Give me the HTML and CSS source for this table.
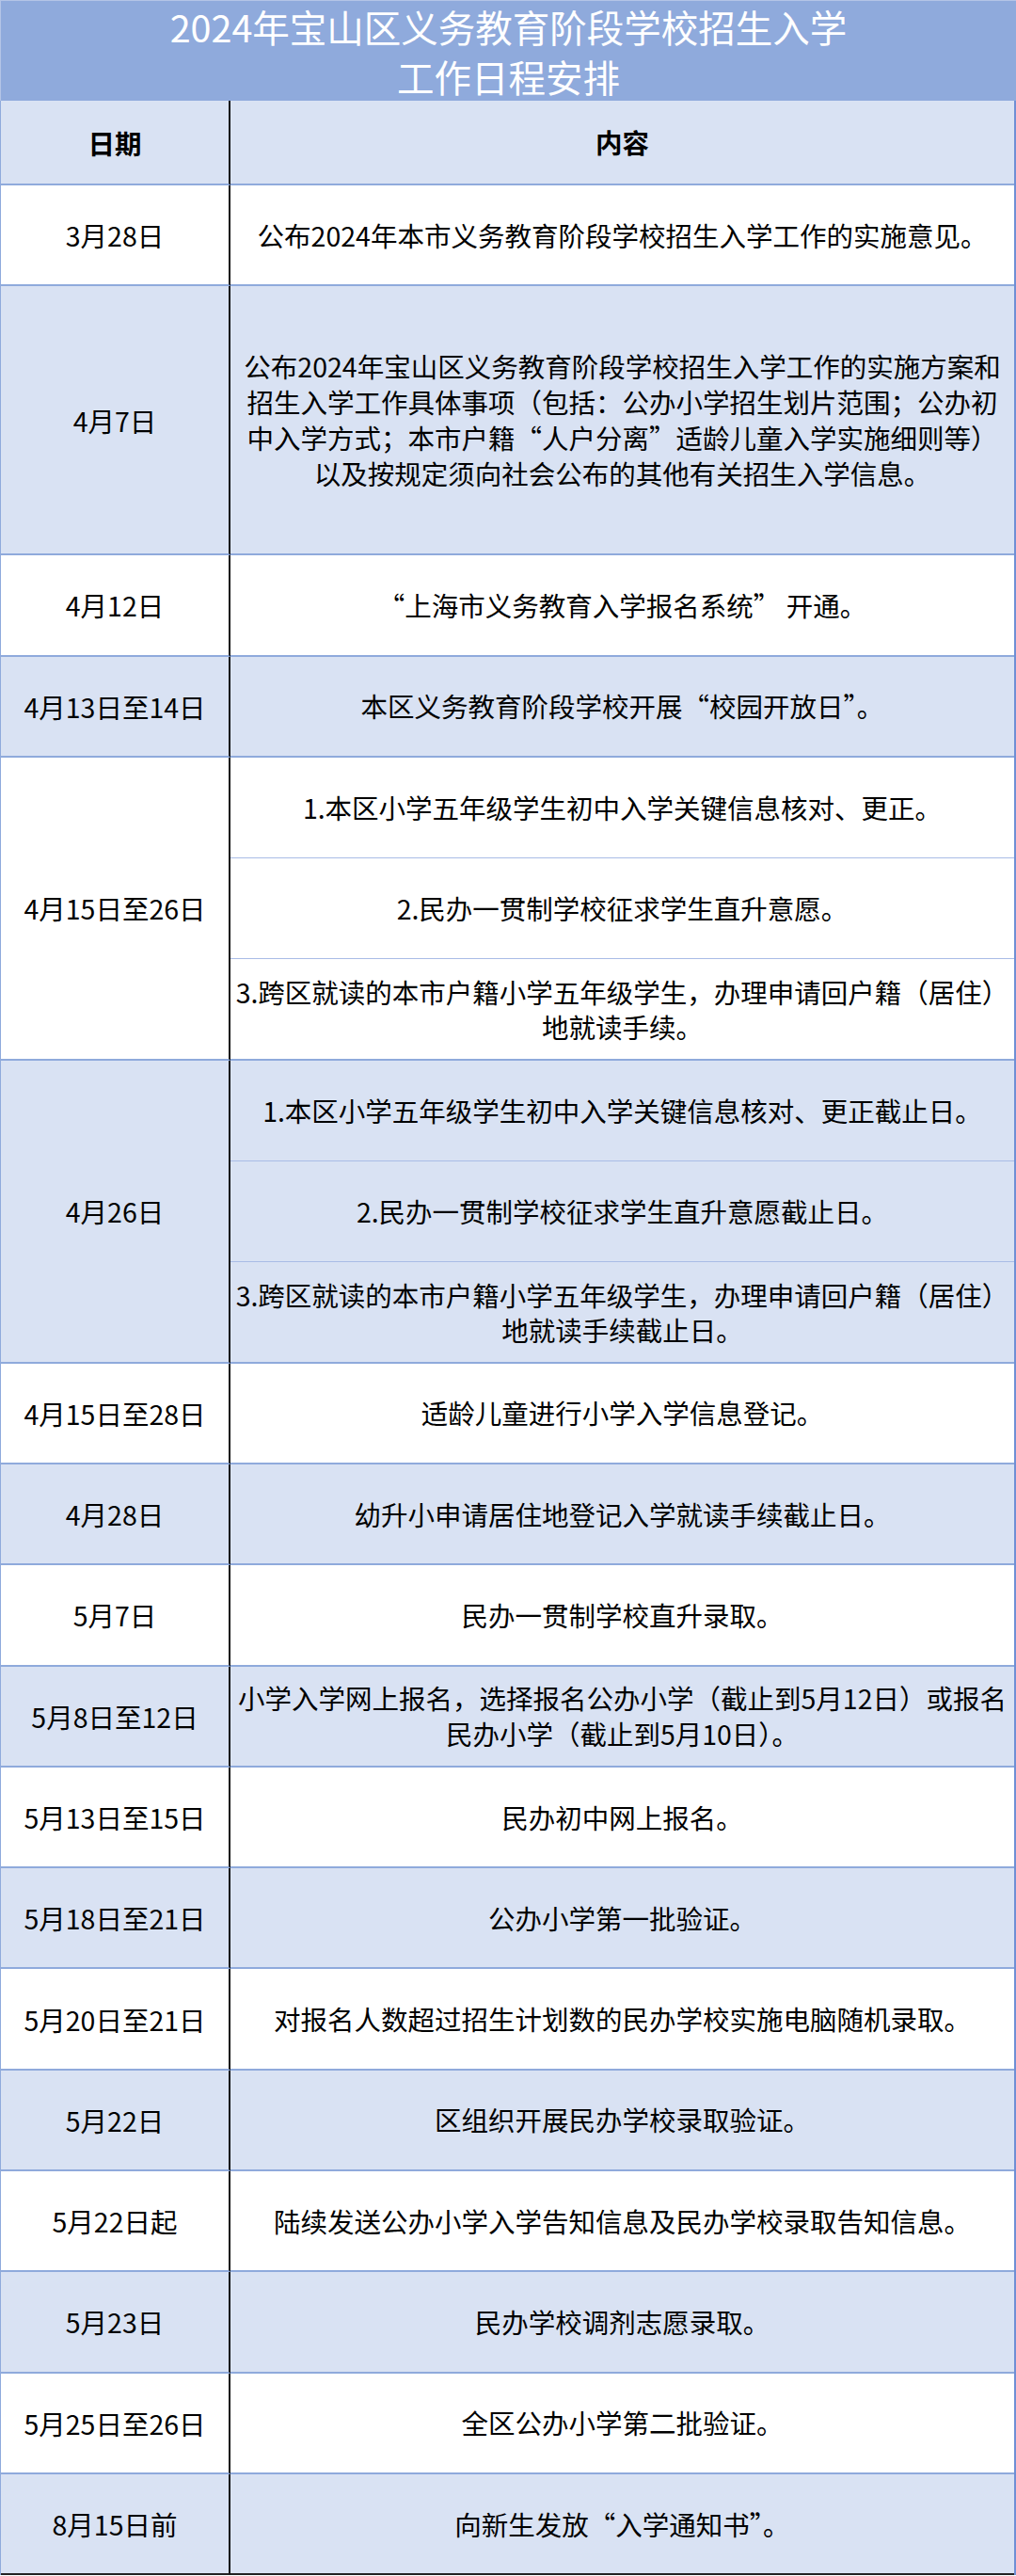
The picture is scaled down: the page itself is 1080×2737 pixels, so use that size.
FILE: index.html
```html
<!DOCTYPE html>
<html lang="zh-CN">
<head>
<meta charset="utf-8">
<title>2024年宝山区义务教育阶段学校招生入学工作日程安排</title>
<link rel="stylesheet" href="styles.css">
</head>
<body>
<div class="sheet">
  <div class="title">
    <div class="title-line">2024年宝山区义务教育阶段学校招生入学</div>
    <div class="title-line">工作日程安排</div>
  </div>
  <div class="table">
    <div class="row head">
      <div class="date">日期</div>
      <div class="content">内容</div>
    </div>
    <div class="row">
      <div class="date">3月28日</div>
      <div class="content">公布2024年本市义务教育阶段学校招生入学工作的实施意见。</div>
    </div>
    <div class="row alt tall">
      <div class="date">4月7日</div>
      <div class="content">公布2024年宝山区义务教育阶段学校招生入学工作的实施方案和<br>招生入学工作具体事项（包括：公办小学招生划片范围；公办初<br>中入学方式；本市户籍“人户分离”适龄儿童入学实施细则等）<br>以及按规定须向社会公布的其他有关招生入学信息。</div>
    </div>
    <div class="row">
      <div class="date">4月12日</div>
      <div class="content">“上海市义务教育入学报名系统” 开通。</div>
    </div>
    <div class="row alt">
      <div class="date">4月13日至14日</div>
      <div class="content">本区义务教育阶段学校开展“校园开放日”。</div>
    </div>
    <div class="row group">
      <div class="date">4月15日至26日</div>
      <div class="subs">
        <div class="sub">1.本区小学五年级学生初中入学关键信息核对、更正。</div>
        <div class="sub">2.民办一贯制学校征求学生直升意愿。</div>
        <div class="sub">3.跨区就读的本市户籍小学五年级学生，办理申请回户籍（居住）<br>地就读手续。</div>
      </div>
    </div>
    <div class="row alt group">
      <div class="date">4月26日</div>
      <div class="subs">
        <div class="sub">1.本区小学五年级学生初中入学关键信息核对、更正截止日。</div>
        <div class="sub">2.民办一贯制学校征求学生直升意愿截止日。</div>
        <div class="sub">3.跨区就读的本市户籍小学五年级学生，办理申请回户籍（居住）<br>地就读手续截止日。</div>
      </div>
    </div>
    <div class="row">
      <div class="date">4月15日至28日</div>
      <div class="content">适龄儿童进行小学入学信息登记。</div>
    </div>
    <div class="row alt">
      <div class="date">4月28日</div>
      <div class="content">幼升小申请居住地登记入学就读手续截止日。</div>
    </div>
    <div class="row">
      <div class="date">5月7日</div>
      <div class="content">民办一贯制学校直升录取。</div>
    </div>
    <div class="row alt">
      <div class="date">5月8日至12日</div>
      <div class="content">小学入学网上报名，选择报名公办小学（截止到5月12日）或报名<br>民办小学（截止到5月10日）。</div>
    </div>
    <div class="row">
      <div class="date">5月13日至15日</div>
      <div class="content">民办初中网上报名。</div>
    </div>
    <div class="row alt">
      <div class="date">5月18日至21日</div>
      <div class="content">公办小学第一批验证。</div>
    </div>
    <div class="row">
      <div class="date">5月20日至21日</div>
      <div class="content">对报名人数超过招生计划数的民办学校实施电脑随机录取。</div>
    </div>
    <div class="row alt">
      <div class="date">5月22日</div>
      <div class="content">区组织开展民办学校录取验证。</div>
    </div>
    <div class="row">
      <div class="date">5月22日起</div>
      <div class="content">陆续发送公办小学入学告知信息及民办学校录取告知信息。</div>
    </div>
    <div class="row alt">
      <div class="date">5月23日</div>
      <div class="content">民办学校调剂志愿录取。</div>
    </div>
    <div class="row">
      <div class="date">5月25日至26日</div>
      <div class="content">全区公办小学第二批验证。</div>
    </div>
    <div class="row alt last">
      <div class="date">8月15日前</div>
      <div class="content">向新生发放“入学通知书”。</div>
    </div>
  </div>
</div>
</body>
</html>
```
FILE: styles.css
```css
* {
  box-sizing: border-box;
}

html, body {
  margin: 0;
  padding: 0;
  background: #ffffff;
}

body {
  font-family: "Noto Sans CJK SC", "Noto Sans", sans-serif;
  color: #000000;
}

.sheet {
  width: 1080px;
}

.title {
  height: 107px;
  display: flex;
  flex-direction: column;
  justify-content: center;
  align-items: center;
  gap: 0;
  background: #8faadc;
  color: #ffffff;
  font-size: 39.5px;
  text-align: center;
  border-top: 1px solid #b4c4e6;
  border-left: 1px solid #b4c4e6;
}

.title-line {
  height: 53px;
  line-height: 53px;
  white-space: nowrap;
}

.table {
  width: 1080px;
  border-left: 1px solid #8faadc;
  border-right: 2px solid #6f8fd4;
}

.row {
  display: flex;
  height: 107.3px;
  background: #ffffff;
}

.row.alt {
  background: #d9e2f3;
}

.row.head {
  height: 90px;
  background: #d9e2f3;
  font-weight: 700;
}

.row.tall {
  height: 286px;
}

.row.group {
  height: 321.9px;
}

.date {
  width: 244px;
  flex: none;
  display: flex;
  align-items: center;
  justify-content: center;
  font-size: 28.5px;
  line-height: 37px;
  white-space: nowrap;
  border-right: 2px solid #111111;
  border-bottom: 2px solid #8faadc;
}

.content {
  flex: 1;
  display: flex;
  align-items: center;
  justify-content: center;
  text-align: center;
  font-size: 28.5px;
  line-height: 38px;
  white-space: nowrap;
  padding: 0 2px;
  border-bottom: 2px solid #8faadc;
}

.subs {
  flex: 1;
  display: flex;
  flex-direction: column;
  border-bottom: 2px solid #8faadc;
}

.sub {
  flex: 1;
  display: flex;
  align-items: center;
  justify-content: center;
  text-align: center;
  font-size: 28.5px;
  line-height: 37px;
  white-space: nowrap;
  padding: 0 2px;
  border-bottom: 1px solid #a9bce6;
}

.sub:last-child {
  border-bottom: none;
}

.row.last .date,
.row.last .content {
  border-bottom: 2px solid #222222;
}
```
